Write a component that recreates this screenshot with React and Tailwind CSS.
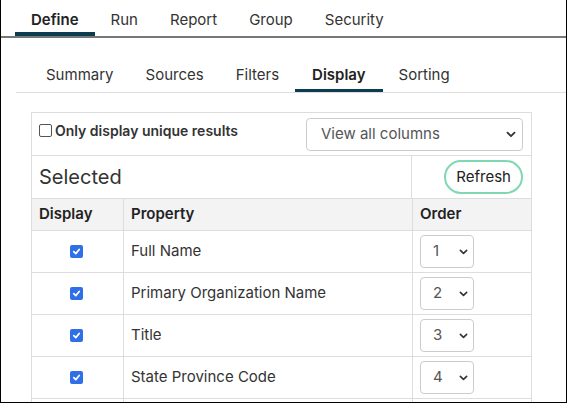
import React from 'react';

const font = { fontFamily: 'Inter, "Noto Sans", sans-serif' };

const Chevron = ({ className = '' }) => (
    <svg viewBox="0 0 10 6" className={className} fill="none" stroke="currentColor" strokeWidth="1.8" strokeLinecap="round" strokeLinejoin="round">
        <path d="M1.5 1.2 L5 4.6 L8.5 1.2" />
    </svg>
);

const Checked = () => (
    <span className="inline-flex w-[13px] h-[13px] rounded-[2px] bg-[#2f6fe8] items-center justify-center">
        <svg viewBox="0 0 10 10" className="w-[9px] h-[9px]" fill="none" stroke="white" strokeWidth="2" strokeLinecap="round" strokeLinejoin="round">
            <path d="M2 5.2 L4.2 7.3 L8 2.8" />
        </svg>
    </span>
);

const App = () => {
    const mainTabs = ['Define', 'Run', 'Report', 'Group', 'Security'];
    const subTabs = ['Summary', 'Sources', 'Filters', 'Display', 'Sorting'];
    const rows = ['Full Name', 'Primary Organization Name', 'Title', 'State Province Code'];

    return (
        <div style={font} className="w-[567px] h-[403px] bg-white border-l border-r border-b border-black overflow-hidden text-[#333]">
            {/* top tabs */}
            <div className="flex h-[38px] border-b-2 border-[#777] pl-[14px]">
                {mainTabs.map((t, i) => (
                    <div
                        key={t}
                        className={`px-[16px] pt-[9px] text-[15px] ${i === 0 ? 'font-semibold text-[#222] border-b-4 border-[#0b3c4f]' : 'text-[#333]'}`}
                    >
                        {t}
                    </div>
                ))}
            </div>

            {/* sub tabs */}
            <div className="flex ml-[15px] mt-[16px] h-[39px] border-b border-[#ddd] pl-[14px]">
                {subTabs.map((t) => (
                    <div
                        key={t}
                        className={`px-[16px] pt-[10px] text-[15px] ${t === 'Display' ? 'font-semibold text-[#222] border-b-[3px] border-[#0b3c4f] px-[17px]' : 'text-[#333]'}`}
                    >
                        {t}
                    </div>
                ))}
            </div>

            {/* panel */}
            <div className="ml-[30px] mt-[19px] w-[501px] border border-[#ddd] text-[15px]">
                <div className="flex items-center justify-between h-[43px] border-b border-[#ddd] pl-[7px] pr-[8px]">
                    <label className="flex items-center gap-[3px] font-semibold text-[14px] text-[#333] -mt-[8px]">
                        <span className="inline-block w-[13px] h-[13px] border border-[#555] rounded-[2px] bg-white" />
                        Only display unique results
                    </label>
                    <div className="w-[217px] h-[33px] border border-[#ccc] rounded-[4px] flex items-center justify-between pl-[14px] pr-[6px] text-[#555]">
                        <span>View all columns</span>
                        <Chevron className="w-[10px] h-[7px] text-[#333]" />
                    </div>
                </div>
                <div className="flex h-[43px] border-b border-[#ddd]">
                    <div className="w-[379px] flex items-center pl-[7px] text-[20px] text-[#333]">Selected</div>
                    <div className="flex-1 border-l border-[#ddd] flex items-center justify-end pr-[8px]">
                        <button className="h-[34px] px-[10px] rounded-full border-2 border-[#7fd8b2] text-[15px] text-[#222]">Refresh</button>
                    </div>
                </div>
                <div className="flex h-[32px] bg-[#f3f3f3] border-b border-[#ddd] font-semibold text-[15px] text-[#222]">
                    <div className="w-[91px] flex items-center pl-[7px]">Display</div>
                    <div className="w-[289px] border-l border-[#ddd] flex items-center pl-[7px]">Property</div>
                    <div className="flex-1 border-l border-[#ddd] flex items-center pl-[7px]">Order</div>
                </div>
                {rows.map((r, i) => (
                    <div key={r} className="flex h-[42px] border-b border-[#ddd]">
                        <div className="w-[91px] flex items-center justify-center pr-[3px]">
                            <Checked />
                        </div>
                        <div className="w-[289px] border-l border-[#ddd] flex items-center pl-[7px] text-[#333]">{r}</div>
                        <div className="flex-1 border-l border-[#ddd] flex items-center pl-[7px]">
                            <div className="w-[54px] h-[33px] border border-[#ccc] rounded-[4px] flex items-center justify-between pl-[12px] pr-[5px] text-[#555]">
                                <span>{i + 1}</span>
                                <Chevron className="w-[9px] h-[6px] text-[#333]" />
                            </div>
                        </div>
                    </div>
                ))}
                <div className="flex h-[42px]">
                    <div className="w-[91px]" />
                    <div className="w-[289px] border-l border-[#ddd]" />
                    <div className="flex-1 border-l border-[#ddd]" />
                </div>
            </div>
        </div>
    );
};

export default App;
